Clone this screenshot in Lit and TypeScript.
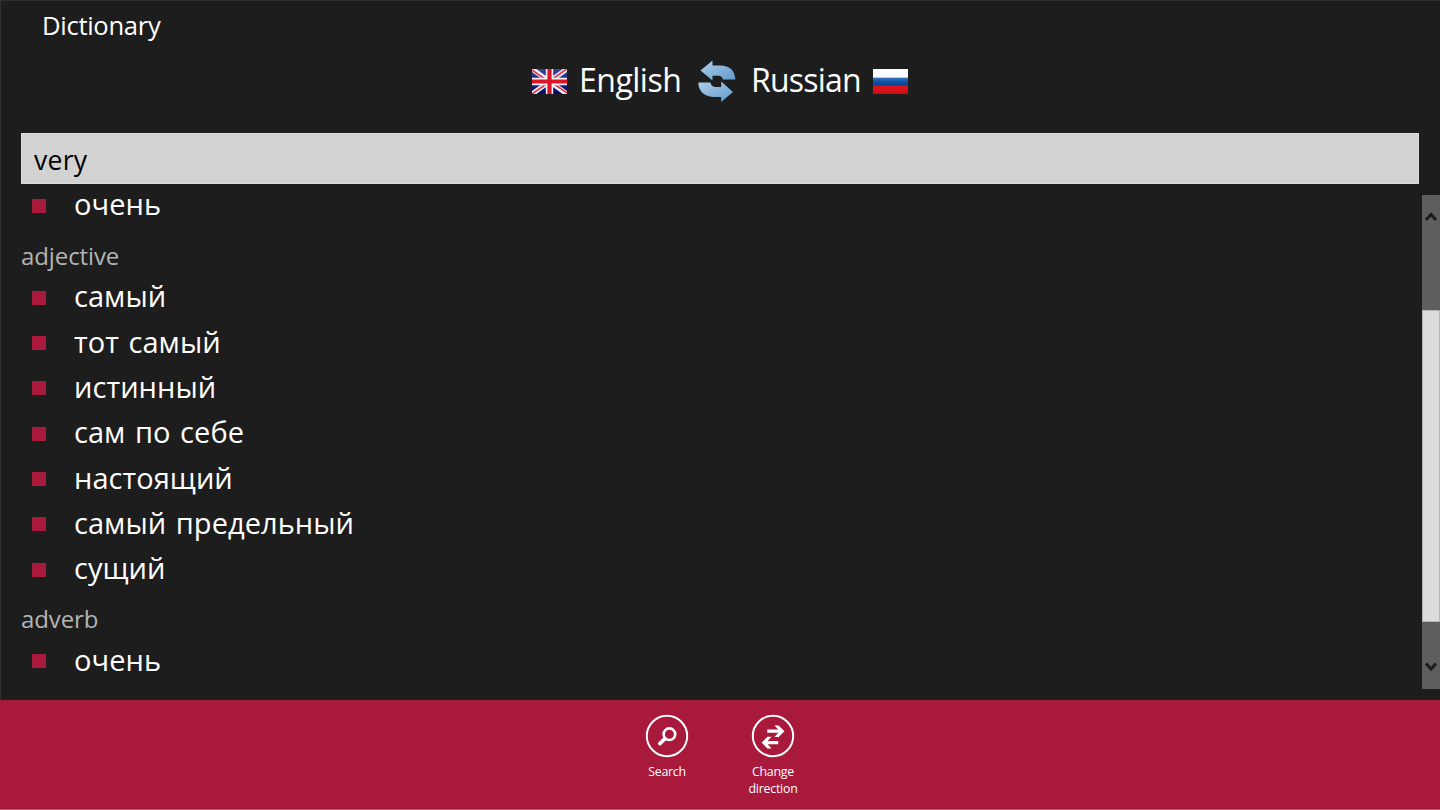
import { LitElement, html, css, svg } from "lit";
import { customElement, property } from "lit/decorators.js";

interface Entry {
	kind: "word" | "heading";
	text: string;
}

const entries: Entry[] = [
	{ kind: "word", text: "очень" },
	{ kind: "heading", text: "adjective" },
	{ kind: "word", text: "самый" },
	{ kind: "word", text: "тот самый" },
	{ kind: "word", text: "истинный" },
	{ kind: "word", text: "сам по себе" },
	{ kind: "word", text: "настоящий" },
	{ kind: "word", text: "самый предельный" },
	{ kind: "word", text: "сущий" },
	{ kind: "heading", text: "adverb" },
	{ kind: "word", text: "очень" },
];

const searchIcon = svg`
	<circle cx="24.4" cy="20.2" r="5.8" fill="none" stroke="#fff" stroke-width="2.6"/>
	<path d="M20 24.6L14.8 29.6" stroke="#fff" stroke-width="3.6" stroke-linecap="round"/>`;

const swapIcon = svg`
	<path fill="#fff" d="M16.2 15.6H27.4L23.4 11.4H27.6L33.4 17.2L27.6 23H23.4L27.4 18.8H16.2Z"/>
	<path fill="#fff" d="M27.2 27H16.6L20.6 22.8H16.4L10.6 28.6L16.4 34.4H20.6L16.6 30.2H27.2Z"/>`;

@customElement("app-command")
export class AppCommand extends LitElement {
	@property()
	label = "";

	@property()
	icon = "search";

	static styles = css`
	:host {
		display: block;
		width: 106px;
	}

	.command {
		display: flex;
		flex-direction: column;
		align-items: center;
		gap: 5px;
		color: white;
		text-align: center;
	}

	svg {
		display: block;
	}

	.label {
		width: 64px;
		font-size: 12.4px;
		line-height: 17px;
		letter-spacing: -0.25px;
	}
	`;

	render() {
		return html`
<div class="command">
	<svg width="44" height="44" viewBox="0 0 44 44">
		<circle cx="22" cy="22" r="20.2" fill="none" stroke="#fff" stroke-width="2"/>
		${this.icon === "search" ? searchIcon : swapIcon}
	</svg>
	<div class="label">${this.label}</div>
</div>
		`;
	}
}

@customElement("app-root")
export class AppRoot extends LitElement {
	static styles = css`
	:host {
		display: block;
		font-family: "Open Sans", "Noto Sans", sans-serif;
	}

	.page {
		box-sizing: border-box;
		width: 1440px;
		height: 810px;
		display: flex;
		flex-direction: column;
		overflow: hidden;
		color: white;
		background: #1d1d1d;
		border-top: 1px solid #303030;
		box-shadow: inset 1px 0 #303030;
	}

	.title {
		height: 50px;
		padding-left: 42px;
		font-size: 25.6px;
		line-height: 50px;
		letter-spacing: -0.3px;
	}

	.languages {
		height: 60px;
		display: flex;
		align-items: center;
		padding-left: 531.5px;
		font-size: 32px;
	}

	.english {
		width: 101px;
		margin: -3px 17.5px 0 12.5px;
		white-space: nowrap;
		letter-spacing: -0.5px;
	}

	.russian {
		width: 108px;
		margin: -3px 13.5px 0 15.5px;
		white-space: nowrap;
		letter-spacing: -0.8px;
	}

	.search {
		box-sizing: border-box;
		height: 51px;
		margin: 22px 21px 0;
		padding-left: 12px;
		color: black;
		background: #d2d2d2;
		border: 1px solid #dcdcdc;
		font-size: 26.5px;
		line-height: 52px;
		letter-spacing: 0.3px;
	}

	.results {
		height: 505px;
		display: flex;
		justify-content: space-between;
	}

	.list {
		flex: 1;
		overflow: hidden;
		padding-left: 21px;
	}

	.scrolled {
		margin-top: -0.8px;
	}

	.word {
		height: 45.33px;
		display: flex;
		align-items: center;
		gap: 28px;
		padding-left: 11px;
		font-size: 29px;
		line-height: 40px;
		letter-spacing: 0.05px;
		word-spacing: 2px;
	}

	.text {
		margin-top: -3px;
	}

	.bullet {
		width: 14px;
		height: 14px;
		background: #a9193b;
	}

	.heading {
		height: 46.5px;
		color: #b4b4b4;
		font-size: 24px;
		line-height: 53px;
		letter-spacing: -0.1px;
	}

	.scrollbar {
		width: 18px;
		margin-top: 11px;
		display: flex;
		flex-direction: column;
		background: #5e5e5e;
	}

	.up {
		height: 115px;
	}

	.up svg {
		display: block;
		margin: 16px 0 0 3px;
	}

	.thumb {
		box-sizing: border-box;
		height: 312px;
		background: #dcdcdc;
		border: 1px solid #b5b5b5;
	}

	.down svg {
		display: block;
		margin: 39px 0 0 3px;
	}

	.commands {
		box-sizing: border-box;
		height: 110px;
		margin-top: 11px;
		padding: 14px 0 0 614px;
		display: flex;
		background: #a9193b;
		border-bottom: 1px solid #c0576e;
	}
	`;

	render() {
		return html`
<div class="page">
	<div class="title">Dictionary</div>
	<div class="languages">
		<svg width="35" height="25" viewBox="0 0 35 25">
			<defs>
				<linearGradient id="navy" x2="0" y2="1">
					<stop stop-color="#37439a"/>
					<stop offset="1" stop-color="#070764"/>
				</linearGradient>
			</defs>
			<rect width="35" height="25" fill="url(#navy)"/>
			<path d="M0 0L35 25M35 0L0 25" stroke="#eeeef6" stroke-width="5"/>
			<path d="M0 1L15 11.5M20 13.5L35 24M34.5 0L20 10.5M15 14.5L0 25" stroke="#dc3c50" stroke-width="1.7"/>
			<path d="M17.5 0V25M0 12.5H35" stroke="#f6f4f8" stroke-width="7.4"/>
			<path d="M17.5 0V25M0 12.5H35" stroke="#dc1428" stroke-width="4.2"/>
		</svg>
		<span class="english">English</span>
		<svg width="38" height="42" viewBox="0 0 38 42">
			<defs>
				<linearGradient id="sky" x2="1" y2="1">
					<stop stop-color="#b0cfea"/>
					<stop offset="1" stop-color="#5d99cc"/>
				</linearGradient>
			</defs>
			<path fill="url(#sky)" d="M2.5 10.5L14.5 0.5V5.5H22C32 5.5 37 11 37.3 19.5H25C24.5 17 23 15.7 20 15.7H14.5V20.5Z"/>
			<path fill="url(#sky)" d="M0.3 22.5H12.5C13 25.3 14.5 27 18 27H23.2V21.5L35 32L23.2 42V37H17C6.5 37 0.5 31.5 0.3 22.5Z"/>
		</svg>
		<span class="russian">Russian</span>
		<svg width="35" height="25" viewBox="0 0 35 25">
			<defs>
				<linearGradient id="blue" x2="0" y2="1">
					<stop stop-color="#3a78c2"/>
					<stop offset="0.55" stop-color="#0c4ba0"/>
					<stop offset="1" stop-color="#0b489b"/>
				</linearGradient>
				<linearGradient id="red" x2="0" y2="1">
					<stop stop-color="#e0161c"/>
					<stop offset="1" stop-color="#c90d12"/>
				</linearGradient>
			</defs>
			<rect width="35" height="9" fill="#fff"/>
			<rect y="8.6" width="35" height="8.6" fill="url(#blue)"/>
			<rect y="17" width="35" height="8" fill="url(#red)"/>
		</svg>
	</div>
	<div class="search">very</div>
	<div class="results">
		<div class="list">
			<div class="scrolled">
				${entries.map((entry) => entry.kind === "heading"
					? html`<div class="heading">${entry.text}</div>`
					: html`<div class="word"><span class="bullet"></span><span class="text">${entry.text}</span></div>`)}
			</div>
		</div>
		<div class="scrollbar">
			<div class="up">
				<svg width="12" height="11" viewBox="0 0 12 11">
					<path d="M1 9L6 3.5L11 9" fill="none" stroke="#1d1d1d" stroke-width="3"/>
				</svg>
			</div>
			<div class="thumb"></div>
			<div class="down">
				<svg width="12" height="11" viewBox="0 0 12 11">
					<path d="M1 2.5L6 8L11 2.5" fill="none" stroke="#1d1d1d" stroke-width="3"/>
				</svg>
			</div>
		</div>
	</div>
	<div class="commands">
		<app-command icon="search" label="Search"></app-command>
		<app-command icon="swap" label="Change direction"></app-command>
	</div>
</div>
		`;
	}
}

declare global {
	interface HTMLElementTagNameMap {
		"app-root": AppRoot;
		"app-command": AppCommand;
	}
}
